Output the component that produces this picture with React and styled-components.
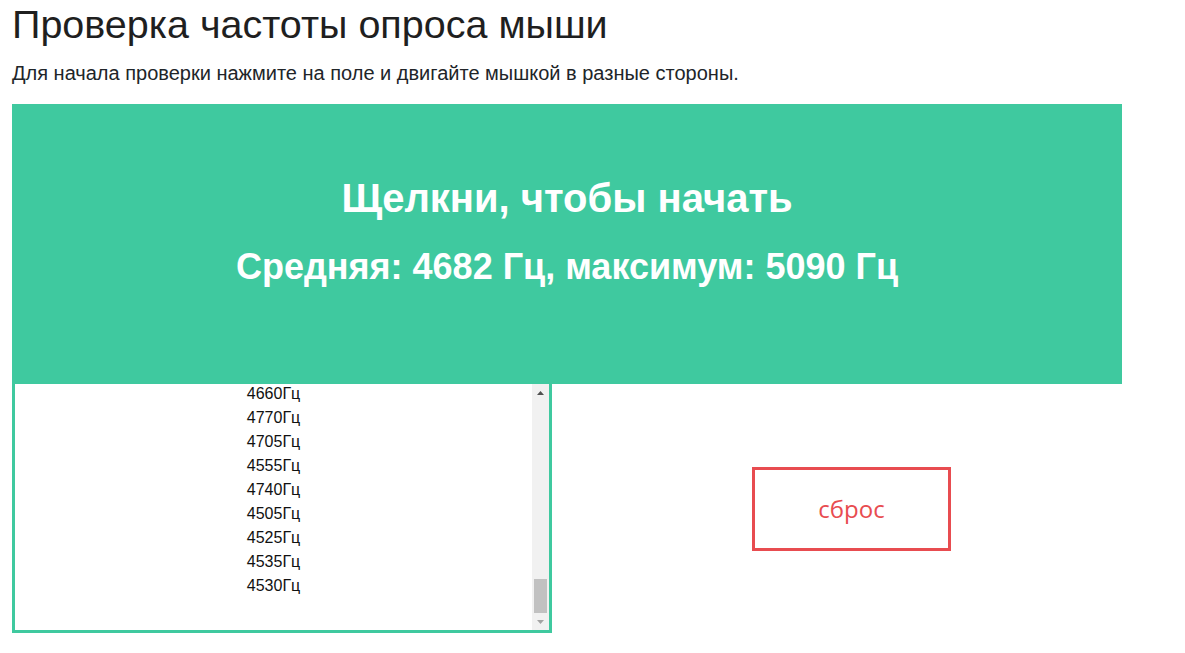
import styled, { createGlobalStyle } from "styled-components";

const GlobalStyle = createGlobalStyle`
  body {
    margin: 0;
    background: #fff;
    font-family: "Liberation Sans", Arial, sans-serif;
    color: #212529;
  }
`;

const rates = [4660, 4770, 4705, 4555, 4740, 4505, 4525, 4535, 4530];

const App = () => {
  return (
    <Page>
      <GlobalStyle />
      <Title>Проверка частоты опроса мыши</Title>
      <Lead>
        Для начала проверки нажмите на поле и двигайте мышкой в разные стороны.
      </Lead>
      <Field>
        <FieldTitle>Щелкни, чтобы начать</FieldTitle>
        <FieldStats>Средняя: 4682 Гц, максимум: 5090 Гц</FieldStats>
      </Field>
      <Bottom>
        <LogBox>
          <LogList>
            {rates.map((r, i) => (
              <LogItem key={i}>{r}Гц</LogItem>
            ))}
          </LogList>
          <Scrollbar>
            <ScrollButton>
              <svg width="7" height="4" viewBox="0 0 7 4">
                <path d="M0 4 L3.5 0 L7 4 Z" fill="#505050" />
              </svg>
            </ScrollButton>
            <Track>
              <Thumb />
            </Track>
            <ScrollButton>
              <svg width="7" height="4" viewBox="0 0 7 4">
                <path d="M0 0 L3.5 4 L7 0 Z" fill="#a3a3a3" />
              </svg>
            </ScrollButton>
          </Scrollbar>
        </LogBox>
        <Controls>
          <ResetButton>сброс</ResetButton>
        </Controls>
      </Bottom>
    </Page>
  );
};

const Page = styled.div`
  padding-left: 12px;
`;

const Title = styled.h1`
  margin: 0;
  font-size: 39.5px;
  line-height: 48px;
  font-weight: 400;
  color: #1f1f1f;
`;

const Lead = styled.p`
  margin: 10px 0 16px;
  font-size: 20px;
  line-height: 30px;
  color: #212529;
`;

const Field = styled.div`
  width: 1110px;
  height: 280px;
  box-sizing: border-box;
  padding-top: 70px;
  background: #3fc99f;
  color: #fff;
  display: flex;
  flex-direction: column;
  align-items: center;
  font-weight: 700;
  cursor: pointer;
`;

const FieldTitle = styled.div`
  font-size: 40px;
  line-height: 48px;
  margin-bottom: 23px;
`;

const FieldStats = styled.div`
  font-size: 36px;
  line-height: 44px;
`;

const Bottom = styled.div`
  display: flex;
  align-items: center;
`;

const LogBox = styled.div`
  width: 534px;
  height: 246px;
  border: 3px solid #3fc99f;
  border-top: none;
  display: flex;
  background: #fff;
`;

const LogList = styled.div`
  flex: 1;
  overflow: hidden;
`;

const LogItem = styled.div`
  font-size: 16px;
  line-height: 24px;
  text-align: center;
  color: #111;
  &:first-child {
    margin-top: -2px;
  }
`;

const Scrollbar = styled.div`
  width: 17px;
  display: flex;
  flex-direction: column;
  background: #f1f1f1;
`;

const ScrollButton = styled.div`
  height: 17px;
  display: flex;
  align-items: center;
  justify-content: center;
`;

const Track = styled.div`
  flex: 1;
  display: flex;
  flex-direction: column;
  justify-content: flex-end;
  padding: 0 2px;
`;

const Thumb = styled.div`
  height: 34px;
  background: #c1c1c1;
`;

const Controls = styled.div`
  width: 599px;
  display: flex;
  justify-content: center;
`;

const ResetButton = styled.button`
  width: 199px;
  height: 84px;
  border: 3px solid #e84c50;
  background: #fff;
  color: #e84c50;
  font-family: "Open Sans", "Liberation Sans", sans-serif;
  font-size: 24px;
  cursor: pointer;
  padding: 0;
`;

export default App;
